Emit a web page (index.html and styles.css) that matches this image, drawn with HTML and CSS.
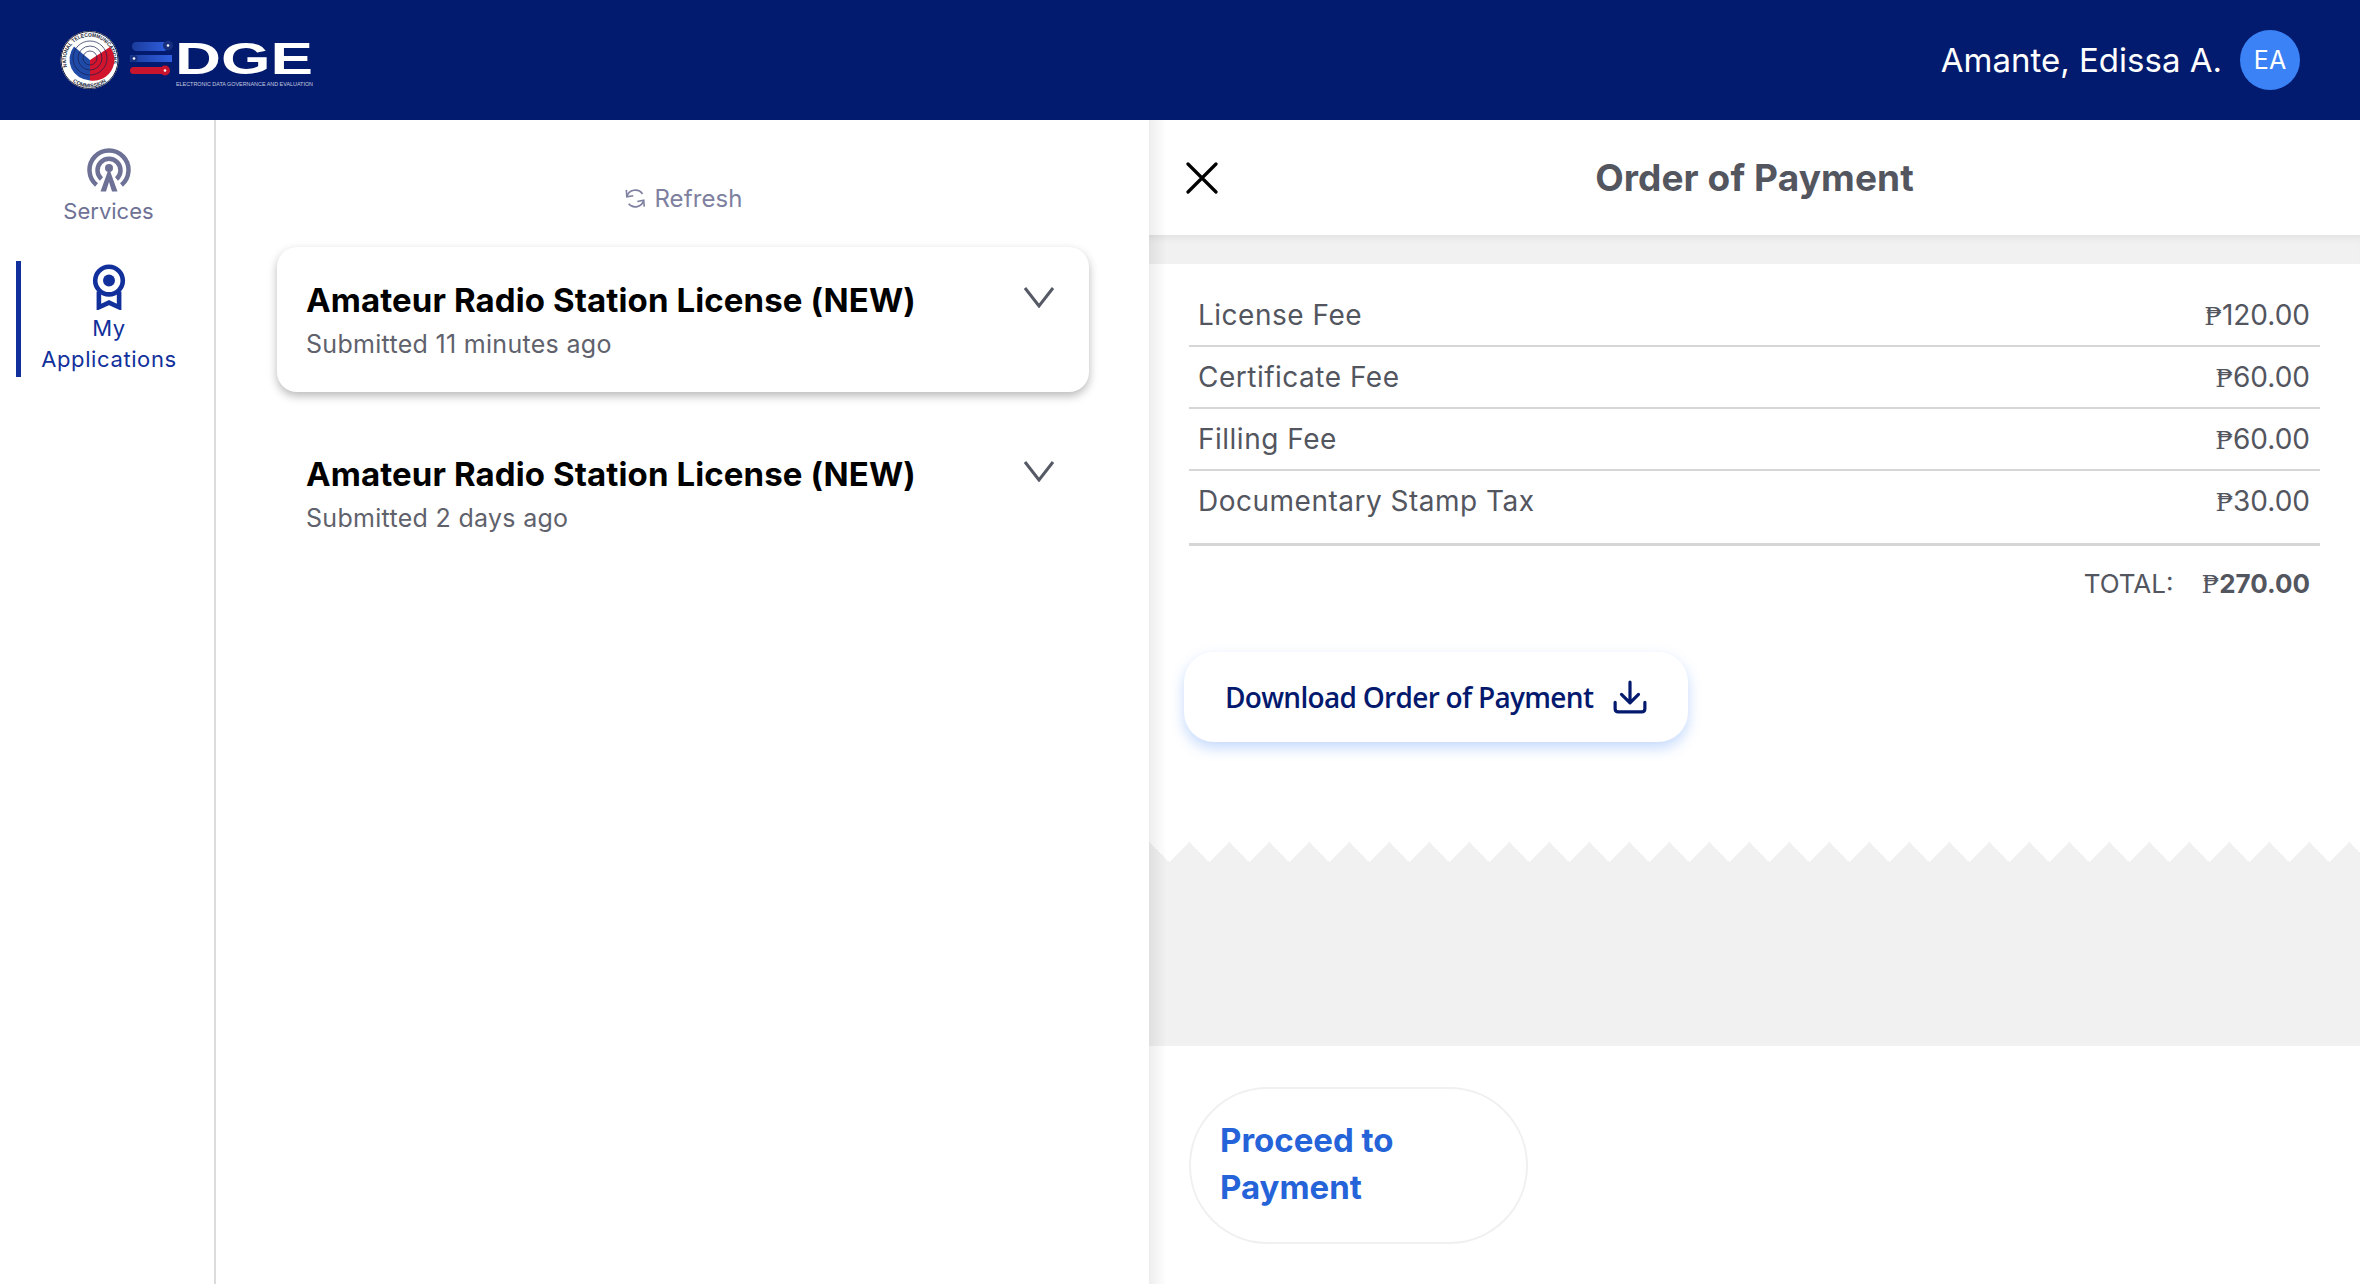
FILE: index.html
```html
<!DOCTYPE html>
<html lang="en">

<head>
    <meta charset="UTF-8">
    <title>EDGE - My Applications</title>
    <link rel="stylesheet" href="styles.css">
</head>

<body>
    <header class="topbar">
        <svg class="logo" width="300" height="100" viewBox="30 10 300 100">
            <defs>
                <path id="sealTop" d="M67 67 A23.5 23.5 0 1 1 112 67" />
                <path id="sealBottom" d="M62 60 A27.5 27.5 0 0 0 117 60" />
                <linearGradient id="barBlue" x1="0" x2="1">
                    <stop offset="0" stop-color="#1b3c9c" />
                    <stop offset="1" stop-color="#2f5ee0" />
                </linearGradient>
            </defs>
            <circle cx="89.5" cy="60" r="29" fill="#fff" />
            <circle cx="89.5" cy="60" r="28.5" fill="none" stroke="#1b1f3a" stroke-width="1" />
            <text class="seal-text"><textPath href="#sealTop" textLength="84" lengthAdjust="spacingAndGlyphs">NATIONAL TELECOMMUNICATIONS</textPath></text>
            <text class="seal-text"><textPath href="#sealBottom" startOffset="25" textLength="36" lengthAdjust="spacingAndGlyphs">COMMISSION</textPath></text>
            <circle cx="89.5" cy="60" r="20.5" fill="#fff" />
            <path d="M90 60 L74 46.5 A21 21 0 0 0 90 80.5 Z" fill="#1f4aa8" />
            <path d="M90 60 L110 47 A21 21 0 0 1 90 80.5 Z" fill="#d2142c" />
            <g fill="none" stroke="#14204f" stroke-width="0.7">
                <circle cx="90" cy="58" r="7" />
                <circle cx="90" cy="58" r="12" />
                <circle cx="90" cy="58" r="17" />
            </g>
            <rect x="132" y="42" width="36" height="9" rx="4.5" fill="url(#barBlue)" />
            <circle cx="168" cy="45.5" r="5" fill="#16307f" />
            <circle cx="168" cy="45.5" r="1.3" fill="#fff" />
            <rect x="130" y="55" width="42" height="7" fill="url(#barBlue)" />
            <circle cx="134" cy="58.5" r="3.5" fill="#16307f" />
            <circle cx="134" cy="58.5" r="1.3" fill="#fff" />
            <rect x="130" y="67" width="36" height="7" rx="3.5" fill="#c8142c" />
            <circle cx="165" cy="70.5" r="5" fill="#c8142c" />
            <circle cx="165" cy="70.5" r="1.3" fill="#fff" />
            <text class="logo-word" x="175" y="74" textLength="138" lengthAdjust="spacingAndGlyphs">DGE</text>
            <text class="logo-sub" x="176" y="86" textLength="137" lengthAdjust="spacingAndGlyphs">ELECTRONIC DATA GOVERNANCE AND EVALUATION</text>
        </svg>
        <div class="user">
            <span class="user-name">Amante, Edissa A.</span>
            <span class="avatar">EA</span>
        </div>
    </header>

    <main class="layout">
        <!-- left menu -->
        <nav class="sidebar">
            <a class="nav-item">
                <svg width="44" height="44" viewBox="0 0 44 44" fill="none" stroke="#6e7196">
                    <path d="M9.5 37 A19.5 19.5 0 1 1 34.5 37" stroke-width="4.5" />
                    <path d="M14.5 31 A11.5 11.5 0 1 1 29.5 31" stroke-width="4.5" />
                    <circle cx="22" cy="20" r="4" fill="#6e7196" stroke="none" />
                    <path d="M22 20 L13.5 43.5 H19 L22 34 L25 43.5 H30.5 Z" fill="#6e7196" stroke="none" />
                </svg>
                <span>Services</span>
            </a>
            <a class="nav-item active">
                <svg width="36" height="46" viewBox="0 0 36 50" fill="none" stroke="#11309b">
                    <circle cx="18" cy="18" r="15" stroke-width="5" />
                    <circle cx="18" cy="18" r="6.5" fill="#11309b" stroke="none" />
                    <path d="M7 30 V47 L18 42 L29 47 V30" stroke-width="5" />
                </svg>
                <span>My<br>Applications</span>
            </a>
        </nav>

        <!-- application list -->
        <section class="list-panel">
            <div class="refresh">
                <svg width="24" height="22" viewBox="2 0 18 19" fill="none" stroke="#7e80a0" stroke-width="1.4">
                    <path d="M4 8.5 A7.5 7.5 0 0 1 17.5 6" />
                    <path d="M3.5 2.5 L4 8.5 L9.5 7.5" />
                    <path d="M18.5 11.5 A7.5 7.5 0 0 1 5.5 14.5" />
                    <path d="M19 17 L18.5 11.5 L13 12.5" />
                </svg>
                <span>Refresh</span>
            </div>
            <div class="app-card selected">
                <div>
                    <h3>Amateur Radio Station License (NEW)</h3>
                    <p>Submitted 11 minutes ago</p>
                </div>
                <svg class="chevron" width="32" height="22" viewBox="0 0 32 22" fill="none" stroke="#555a65" stroke-width="3">
                    <path d="M2 2 L16 20 L30 2" />
                </svg>
            </div>
            <div class="app-card">
                <div>
                    <h3>Amateur Radio Station License (NEW)</h3>
                    <p>Submitted 2 days ago</p>
                </div>
                <svg class="chevron" width="32" height="22" viewBox="0 0 32 22" fill="none" stroke="#555a65" stroke-width="3">
                    <path d="M2 2 L16 20 L30 2" />
                </svg>
            </div>
        </section>

        <!-- order of payment -->
        <section class="order-panel">
            <div class="order-head">
                <svg class="close" width="32" height="32" viewBox="0 0 32 32" fill="none" stroke="#000" stroke-width="3.2" stroke-linecap="round">
                    <path d="M2 2 L30 30 M30 2 L2 30" />
                </svg>
                <h2>Order of Payment</h2>
            </div>
            <div class="band"></div>
            <div class="order-body">
                <div class="fee-row"><span class="fee-name">License Fee</span><span><i class="peso">₱</i>120.00</span></div>
                <div class="fee-row"><span class="fee-name">Certificate Fee</span><span><i class="peso">₱</i>60.00</span></div>
                <div class="fee-row"><span class="fee-name">Filling Fee</span><span><i class="peso">₱</i>60.00</span></div>
                <div class="fee-row last"><span class="fee-name">Documentary Stamp Tax</span><span><i class="peso">₱</i>30.00</span></div>
                <div class="total"><span>TOTAL:</span><span><i class="peso">₱</i><b>270.00</b></span></div>
                <button class="download">
                    <span>Download Order of Payment</span>
                    <svg width="34" height="34" viewBox="0 0 32 32" fill="none" stroke="#03196e" stroke-width="3" stroke-linecap="round" stroke-linejoin="round">
                        <path d="M16 2 V21 M8 13.5 L16 21.5 L24 13.5" />
                        <path d="M2 21 V27 Q2 30 5 30 H27 Q30 30 30 27 V21" />
                    </svg>
                </button>
            </div>
            <div class="torn"></div>
            <div class="order-foot">
                <button class="proceed">Proceed to Payment</button>
            </div>
        </section>
    </main>
</body>

</html>
```

FILE: styles.css
```css
/* General styles */
* {
    box-sizing: border-box;
}

body {
    margin: 0;
    width: 2360px;
    height: 1284px;
    overflow: hidden;
    background: #fff;
    font-family: Inter, "Open Sans", sans-serif;
    color: #53565f;
}

button {
    font-family: inherit;
    background: #fff;
    cursor: pointer;
}

/* Top bar */
.topbar {
    height: 120px;
    background: #031b6e;
    display: flex;
    justify-content: space-between;
    align-items: center;
    padding: 0 60px 0 30px;
}

.logo {
    display: block;
}

.seal-text {
    font-family: "Liberation Sans", sans-serif;
    font-size: 5.4px;
    font-weight: 700;
    fill: #1b1f3a;
}

.logo-word {
    font-family: "Liberation Sans", sans-serif;
    font-size: 45px;
    font-weight: 700;
    fill: #fff;
}

.logo-sub {
    font-family: "Liberation Sans", sans-serif;
    font-size: 6px;
    fill: #c6cbe0;
}

.user {
    display: flex;
    align-items: center;
    gap: 18px;
}

.user-name {
    color: #fff;
    font-size: 33px;
}

.avatar {
    width: 60px;
    height: 60px;
    border-radius: 50%;
    background: #3b82f6;
    color: #fff;
    font-size: 25px;
    display: flex;
    align-items: center;
    justify-content: center;
}

/* Main columns */
.layout {
    display: grid;
    grid-template-columns: 216px 933px 1211px;
    height: 1164px;
}

/* Sidebar */
.sidebar {
    border-right: 2px solid #dcdcdc;
    padding: 28px 0 0 3px;
    display: flex;
    flex-direction: column;
    gap: 34px;
}

.nav-item {
    display: flex;
    flex-direction: column;
    align-items: center;
    gap: 4px;
    font-size: 22px;
    line-height: 31px;
    color: #6e7196;
    text-align: center;
}

.nav-item.active {
    color: #11309b;
    border-left: 5px solid #11309b;
    margin-left: 13px;
    padding: 3px 17px 0 0;
    height: 116px;
    gap: 3px;
    letter-spacing: 0.6px;
}

/* Application list */
.list-panel {
    padding: 0 60px 0 61px;
}

.refresh {
    height: 127px;
    padding-top: 29px;
    display: flex;
    align-items: center;
    justify-content: center;
    gap: 7px;
    font-size: 24px;
    letter-spacing: 0.1px;
    color: #7e80a0;
}

.app-card {
    height: 145px;
    margin-bottom: 29px;
    padding: 33px 30px 0 29px;
    border-radius: 20px;
    display: flex;
    justify-content: space-between;
    align-items: flex-start;
}

.app-card.selected {
    box-shadow: 0 4px 10px rgba(0, 0, 0, 0.28);
}

.app-card h3 {
    margin: 0;
    font-size: 33px;
    line-height: 40px;
    font-weight: 700;
    letter-spacing: 0.1px;
    color: #000;
}

.app-card p {
    margin: 6px 0 0;
    font-size: 25px;
    line-height: 36px;
    letter-spacing: 0.3px;
    color: #5f626c;
}

.chevron {
    margin: 6px 4px 0 0;
}

/* Order of payment panel */
.order-panel {
    position: relative;
    display: flex;
    flex-direction: column;
}

/* soft shadow along the left edge, over the white and grey parts */
.order-panel::after {
    content: "";
    position: absolute;
    top: 0;
    bottom: 0;
    left: 0;
    width: 18px;
    background: linear-gradient(to right, rgba(0, 0, 0, 0.07), rgba(0, 0, 0, 0));
    pointer-events: none;
}

.order-head {
    height: 115px;
    display: grid;
    grid-template-columns: 1fr auto 1fr;
    align-items: center;
}

.close {
    display: block;
    margin-left: 37px;
}

.order-head h2 {
    margin: 0;
    font-size: 37px;
    font-weight: 700;
    letter-spacing: 0.1px;
}

.band {
    height: 29px;
    background: #f1f1f1;
    box-shadow: inset 0 8px 8px -6px rgba(0, 0, 0, 0.08);
}

.order-body {
    height: 578px;
    padding: 21px 40px 0;
}

.fee-row {
    height: 62px;
    padding: 0 10px 0 9px;
    display: flex;
    justify-content: space-between;
    font-size: 28px;
    line-height: 61px;
    border-bottom: 2px solid #d6d6d6;
}

.fee-row.last {
    height: 75px;
    border-bottom-width: 3px;
}

.fee-name {
    letter-spacing: 0.5px;
}

.peso {
    font-family: "DejaVu Serif", serif;
    font-style: normal;
    font-size: 25px;
}

.total {
    display: flex;
    justify-content: flex-end;
    gap: 28px;
    padding: 18px 10px 0 0;
    font-size: 26px;
    line-height: 40px;
}

.download {
    margin: 47px 0 0 -5px;
    width: 504px;
    height: 90px;
    border: 0;
    border-radius: 30px;
    display: flex;
    align-items: center;
    justify-content: space-between;
    padding: 0 41px 0 41px;
    font-family: "Open Sans", sans-serif;
    font-size: 28px;
    font-weight: 600;
    letter-spacing: -0.7px;
    white-space: nowrap;
    color: #03196e;
    box-shadow: 0 6px 14px rgba(59, 130, 246, 0.3);
}

.download svg {
    flex-shrink: 0;
}

/* zigzag edge of the receipt */
.torn {
    height: 204px;
    background:
        conic-gradient(from 135deg at 50% 0, #f1f1f1 90deg, transparent 0) -20px 0 / 40px 20px repeat-x,
        linear-gradient(#f1f1f1, #f1f1f1) 0 20px / 100% 100% no-repeat;
}

.order-foot {
    padding: 41px 0 0 40px;
}

.proceed {
    width: 339px;
    height: 157px;
    border: 2px solid #f0f0f0;
    border-radius: 79px;
    padding: 0 29px 4px;
    text-align: left;
    font-size: 33px;
    line-height: 47px;
    font-weight: 700;
    color: #2563d9;
}
```
